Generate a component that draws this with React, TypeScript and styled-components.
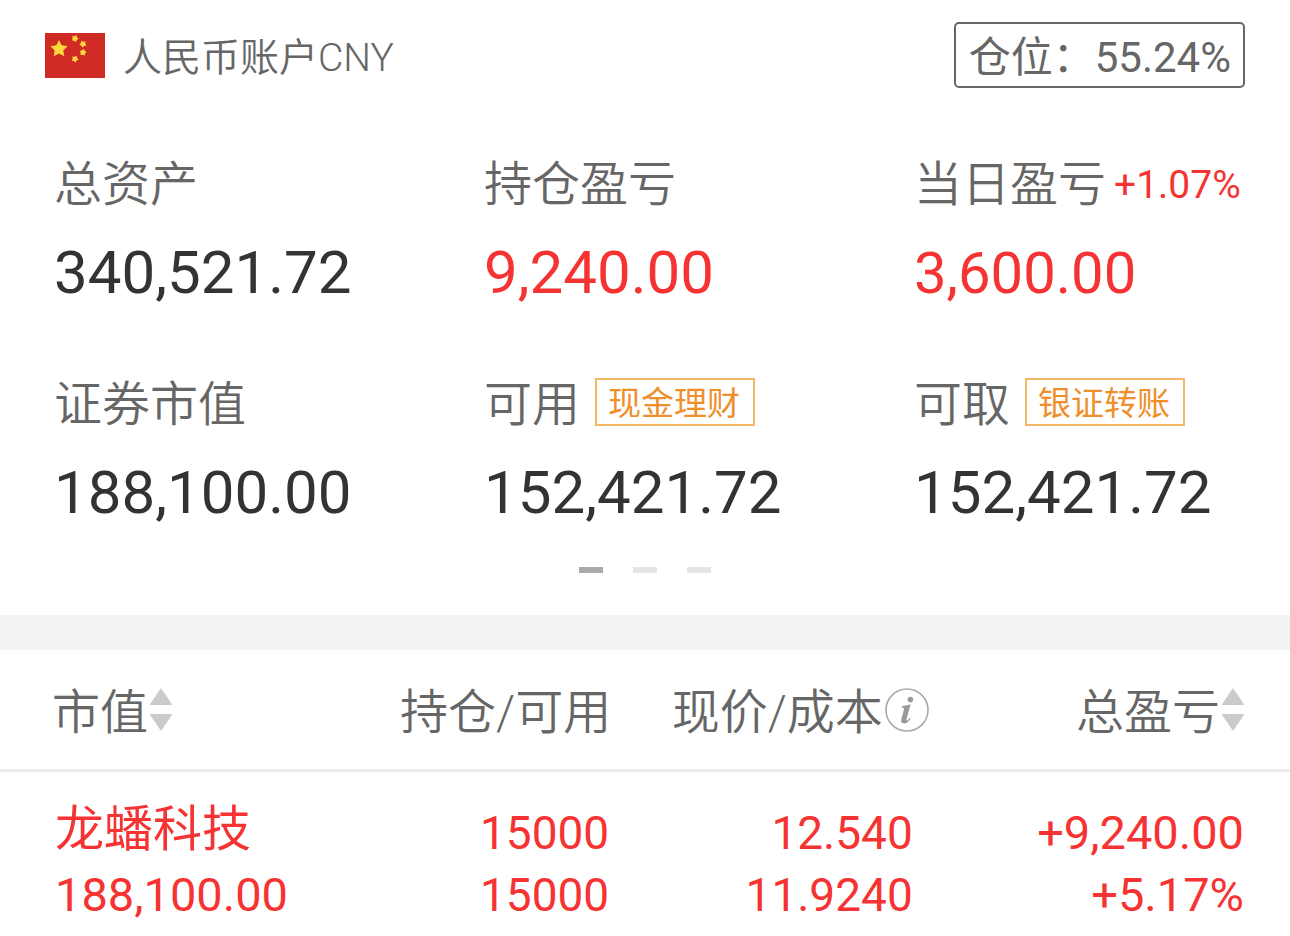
import React from "react";
import styled, { createGlobalStyle } from "styled-components";

const GlobalStyle = createGlobalStyle`
  *, *::before, *::after { box-sizing: border-box; }
  body {
    margin: 0;
    background: #fff;
    color: #666;
    font-family: Roboto, "Noto Sans CJK SC", sans-serif;
    font-weight: 400;
  }
  button {
    margin: 0;
    padding: 0;
    border: 0;
    background: none;
    color: inherit;
    font: inherit;
    cursor: pointer;
  }
`;

const colors = {
  ink: "#333",
  label: "#666",
  red: "#f53333",
  orange: "#ee8f2c",
  orangeLine: "#f2b866",
};

type Tone = "ink" | "red";

const Page = styled.main`
  width: 100%;
`;

const AccountHeader = styled.header`
  display: flex;
  align-items: center;
  justify-content: space-between;
  padding: 22px 45px 0;
`;

const Account = styled.h1`
  display: flex;
  align-items: center;
  gap: 18px;
  margin: 0;
  font-size: 39px;
  font-weight: 350;
  line-height: 60px;
`;

const AccountName = styled.span`
  padding-top: 6px;
`;

const Position = styled.div`
  height: 66px;
  padding: 2px 12px 0 13px;
  border: 2px solid ${colors.label};
  border-radius: 5px;
  font-size: 42px;
  line-height: 64px;
  white-space: nowrap;
`;

const Metrics = styled.dl`
  display: grid;
  grid-template-columns: repeat(3, 1fr);
  row-gap: 59px;
  margin: 0;
  padding-top: 64px;
`;

const Metric = styled.div`
  padding-left: 54px;
  white-space: nowrap;
`;

const MetricLabel = styled.dt`
  display: flex;
  align-items: center;
  height: 64px;
  padding-top: 2px;
  font-size: 48px;
  font-weight: 350;
  line-height: 62px;
`;

const MetricValue = styled.dd<{ $tone: Tone; $small?: boolean }>`
  margin: 0;
  padding-top: 17px;
  color: ${(p) => colors[p.$tone]};
  font-size: ${(p) => (p.$small ? 58 : 60)}px;
  line-height: 80px;
`;

const DayRate = styled.span`
  margin-left: 8px;
  color: ${colors.red};
  font-size: 39px;
  font-weight: 400;
`;

const LinkButton = styled.button`
  height: 48px;
  margin: 0 0 6px 15px;
  padding: 3px 13px 0 11px;
  border: 2px solid ${colors.orangeLine};
  color: ${colors.orange};
  font-size: 33px;
  font-weight: 400;
  line-height: 40px;
`;

const Pager = styled.nav`
  display: flex;
  justify-content: center;
  gap: 30px;
  padding: 34px 0 42px;
`;

const PagerMark = styled.button<{ $active?: boolean }>`
  width: 24px;
  height: 6px;
  background: ${(p) => (p.$active ? "#aaa" : "#e5e5e5")};
`;

const Band = styled.div`
  height: 35px;
  background: #f2f3f5;
`;

const Holdings = styled.table`
  width: 100%;
  border-collapse: collapse;
  table-layout: fixed;
`;

const Col = styled.col<{ $share: number }>`
  width: ${(p) => p.$share}%;
`;

const HeadCell = styled.th<{ $inset?: number }>`
  height: 120px;
  padding: 4px ${(p) => p.$inset ?? 0}px 0 0;
  border-bottom: 3px solid #ebebeb;
  font-size: 48px;
  font-weight: 350;
  line-height: 64px;
  text-align: right;
  white-space: nowrap;

  &:first-child {
    padding-left: 52px;
    text-align: left;
  }

  svg {
    margin-bottom: 6px;
  }
`;

const HeadText = styled.span`
  display: inline-flex;
  align-items: center;
  vertical-align: middle;
`;

const Cell = styled.td<{ $inset?: number; $wide?: boolean }>`
  padding: 30px ${(p) => p.$inset ?? 0}px 10px 0;
  color: ${colors.red};
  font-size: ${(p) => (p.$wide ? 47 : 46)}px;
  line-height: 62px;
  text-align: right;
  white-space: nowrap;

  &:first-child {
    padding-left: 55px;
    text-align: left;
  }
`;

const Line = styled.div`
  height: 62px;
`;

const StockName = styled(Line)`
  font-size: 49px;
  line-height: 56px;
`;

const star = (cx: number, cy: number, r: number, turn: number, inner: number) =>
  Array.from({ length: 10 }, (_, i) => {
    const radius = i % 2 ? r * inner : r;
    const a = ((turn - 90 + i * 36) * Math.PI) / 180;
    return `${(cx + radius * Math.cos(a)).toFixed(2)},${(cy + radius * Math.sin(a)).toFixed(2)}`;
  }).join(" ");

const Flag = () => (
  <svg width="60" height="45" viewBox="0 0 60 45" role="img" aria-label="中国">
    <rect width="60" height="45" fill="#d02a24" />
    <g fill="#fbd93a">
      <polygon points={star(14, 16, 9, 0, 0.5)} />
      <polygon points={star(30, 5.5, 3.6, 20, 0.65)} />
      <polygon points={star(38, 11, 3.6, 45, 0.65)} />
      <polygon points={star(38, 19.5, 3.6, 10, 0.65)} />
      <polygon points={star(30, 26, 3.6, 25, 0.65)} />
    </g>
  </svg>
);

const SortIcon = () => (
  <svg width="25" height="44" viewBox="0 0 25 44" aria-hidden="true" fill="#cbcbcb">
    <path d="M13 0 24.500 17H1.500Z" />
    <path d="M1.500 26H24.500L13 43Z" />
  </svg>
);

const InfoIcon = () => (
  <svg width="46" height="44" viewBox="0 0 46 44" aria-hidden="true">
    <circle cx="24" cy="22" r="21" fill="none" stroke="#aaa" strokeWidth="1.600" />
    <circle cx="27.400" cy="11.600" r="2.800" fill="#999" />
    <path
      d="M18.800 18c2.800-.2 5.600-.8 8.800-1.800l-4.100 15c-.4 1.500.3 1.800 1.200 1 .8-.7 1.500-1.600 2.100-2.500l.9.600c-1.700 2.900-3.700 5.100-6.300 5.100-2.800 0-3.800-1.600-3.100-4.100l2.600-9.600c.4-1.600-.1-2.300-2.100-2.300Z"
      fill="#999"
    />
  </svg>
);

interface MetricItem {
  label: string;
  value: string;
  tone: Tone;
  rate?: string;
  action?: string;
  small?: boolean;
}

const metrics: MetricItem[] = [
  { label: "总资产", value: "340,521.72", tone: "ink" },
  { label: "持仓盈亏", value: "9,240.00", tone: "red" },
  { label: "当日盈亏", value: "3,600.00", tone: "red", rate: "+1.07%", small: true },
  { label: "证券市值", value: "188,100.00", tone: "ink" },
  { label: "可用", value: "152,421.72", tone: "ink", action: "现金理财" },
  { label: "可取", value: "152,421.72", tone: "ink", action: "银证转账" },
];

export default function App() {
  return (
    <>
      <GlobalStyle />
      <Page>
        <AccountHeader>
          <Account>
            <Flag />
            <AccountName>人民币账户CNY</AccountName>
          </Account>
          <Position>仓位：55.24%</Position>
        </AccountHeader>

        <Metrics>
          {metrics.map((m) => (
            <Metric key={m.label}>
              <MetricLabel>
                {m.label}
                {m.rate && <DayRate>{m.rate}</DayRate>}
                {m.action && <LinkButton type="button">{m.action}</LinkButton>}
              </MetricLabel>
              <MetricValue $tone={m.tone} $small={m.small}>
                {m.value}
              </MetricValue>
            </Metric>
          ))}
        </Metrics>

        <Pager aria-label="账户">
          <PagerMark type="button" $active aria-label="1" />
          <PagerMark type="button" aria-label="2" />
          <PagerMark type="button" aria-label="3" />
        </Pager>

        <Band />

        <Holdings>
          <colgroup>
            <Col $share={24} />
            <Col $share={24} />
            <Col $share={24} />
            <Col $share={28} />
          </colgroup>
          <thead>
            <tr>
              <HeadCell scope="col">
                <HeadText as="button" type="button">
                  市值
                  <SortIcon />
                </HeadText>
              </HeadCell>
              <HeadCell scope="col" $inset={8}>
                <HeadText>持仓/可用</HeadText>
              </HeadCell>
              <HeadCell scope="col">
                <HeadText as="button" type="button">
                  现价/成本
                  <InfoIcon />
                </HeadText>
              </HeadCell>
              <HeadCell scope="col" $inset={45}>
                <HeadText as="button" type="button">
                  总盈亏
                  <SortIcon />
                </HeadText>
              </HeadCell>
            </tr>
          </thead>
          <tbody>
            <tr>
              <Cell $wide>
                <StockName>龙蟠科技</StockName>
                <Line>188,100.00</Line>
              </Cell>
              <Cell $inset={10}>
                <Line>15000</Line>
                <Line>15000</Line>
              </Cell>
              <Cell $inset={16}>
                <Line>12.540</Line>
                <Line>11.9240</Line>
              </Cell>
              <Cell $inset={46} $wide>
                <Line>+9,240.00</Line>
                <Line>+5.17%</Line>
              </Cell>
            </tr>
          </tbody>
        </Holdings>
      </Page>
    </>
  );
}
